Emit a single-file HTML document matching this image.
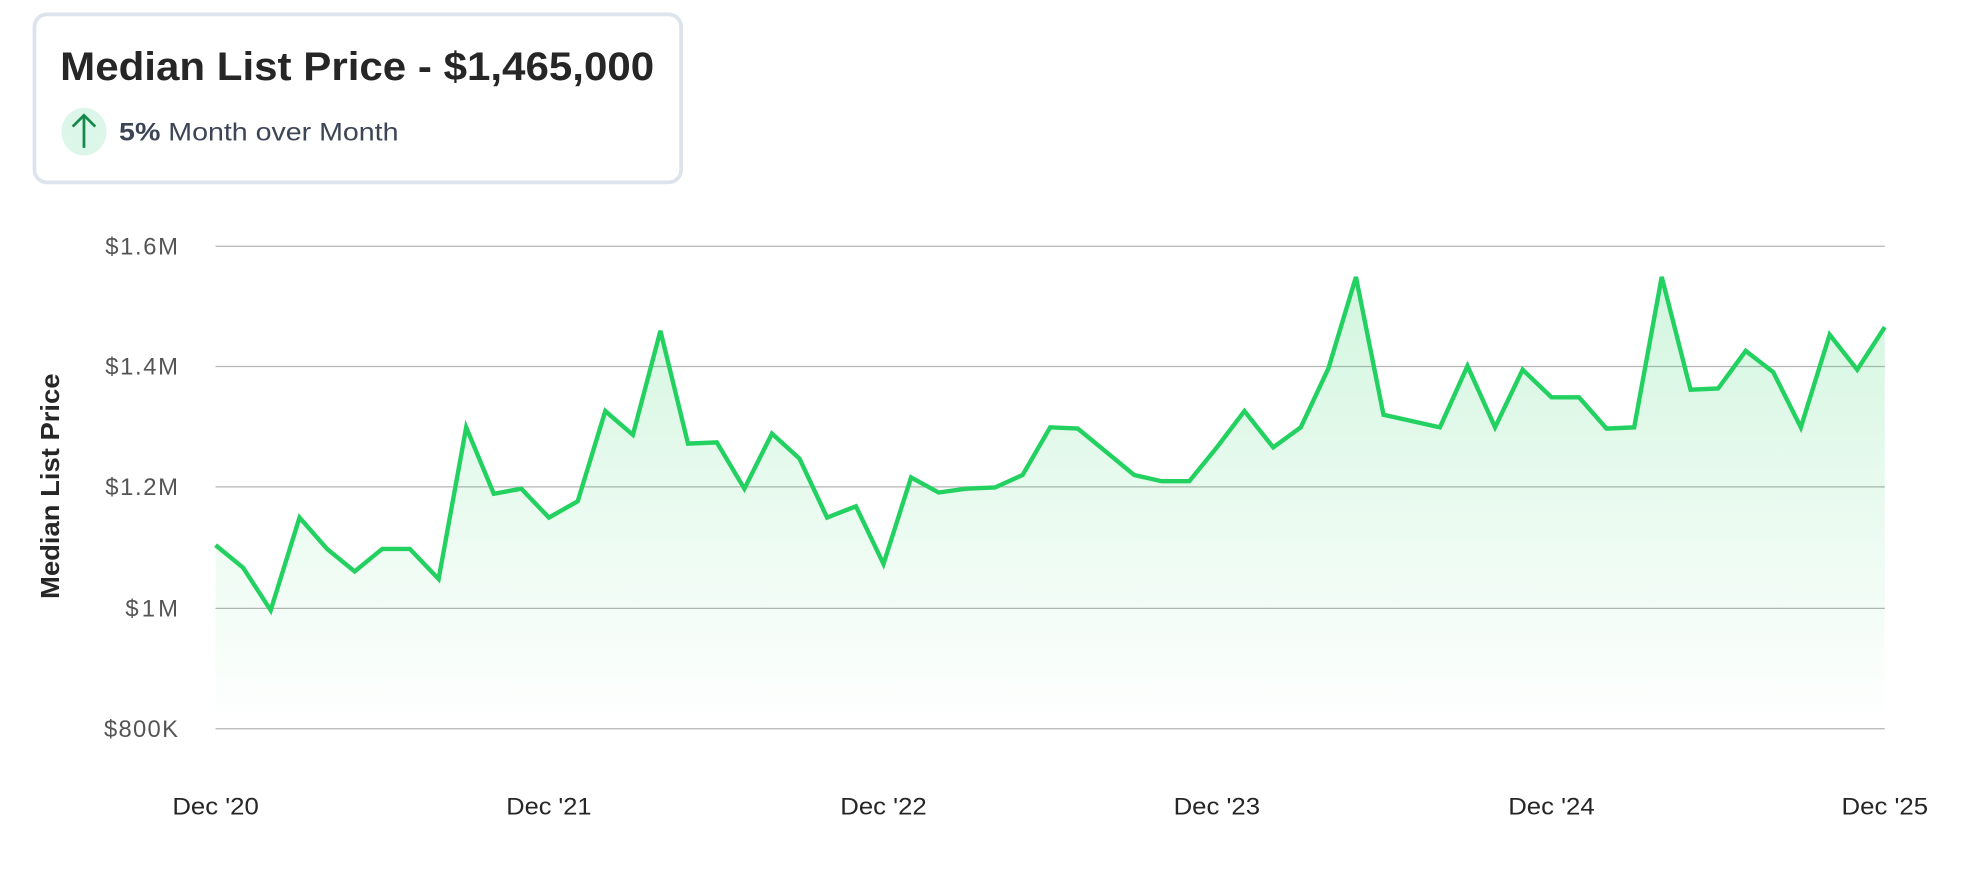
<!DOCTYPE html>
<html><head><meta charset="utf-8"><style>
html,body{margin:0;padding:0;background:#fff;width:1965px;height:886px;overflow:hidden}
svg{display:block}
text{font-family:"Liberation Sans",sans-serif}
</style></head><body>
<svg width="1965" height="886" viewBox="0 0 1568 707" xmlns="http://www.w3.org/2000/svg">
<defs>
<linearGradient id="g" x1="0" y1="0" x2="0" y2="1" gradientUnits="userSpaceOnUse" gradientTransform="translate(0,220) scale(1,361)">
<stop offset="0" stop-color="#22d160" stop-opacity="0.2"/>
<stop offset="1" stop-color="#22d160" stop-opacity="0"/>
</linearGradient>
</defs>
<rect x="27.5" y="11.5" width="516" height="134" rx="10" fill="#fff" stroke="#dde3ec" stroke-width="3"/>
<text x="48" y="64" font-size="32" font-weight="bold" fill="#262626" textLength="474" lengthAdjust="spacingAndGlyphs">Median List Price - $1,465,000</text>
<ellipse cx="67" cy="105" rx="18" ry="19" fill="#dcf7e9"/>
<path d="M67 118 V92 M58 101 L67 92 L76 101" stroke="#16894a" stroke-width="2.2" fill="none"/>
<text x="95" y="112" font-size="20" fill="#3c4556" textLength="223" lengthAdjust="spacingAndGlyphs"><tspan font-weight="bold">5%</tspan> Month over Month</text>
<g stroke="#b5b5b5" stroke-width="1">
<line x1="172" y1="196.5" x2="1504" y2="196.5"/>
<line x1="172" y1="292.5" x2="1504" y2="292.5"/>
<line x1="172" y1="388.5" x2="1504" y2="388.5"/>
<line x1="172" y1="485.5" x2="1504" y2="485.5"/>
<line x1="172" y1="581.5" x2="1504" y2="581.5"/>
</g>
<g font-size="19" fill="#555" lengthAdjust="spacingAndGlyphs">
<text x="84" y="203" textLength="58">$1.6M</text>
<text x="84" y="299" textLength="58">$1.4M</text>
<text x="84" y="395" textLength="58">$1.2M</text>
<text x="100" y="492" textLength="42">$1M</text>
<text x="83" y="588" textLength="59">$800K</text>
</g>
<text transform="translate(47,388) rotate(-90)" x="-90" font-size="21" font-weight="bold" fill="#262626" textLength="180" lengthAdjust="spacingAndGlyphs">Median List Price</text>
<g font-size="19" fill="#262626">
<text x="137.5" y="650" textLength="69" lengthAdjust="spacingAndGlyphs">Dec '20</text>
<text x="404" y="650" textLength="68" lengthAdjust="spacingAndGlyphs">Dec '21</text>
<text x="670.5" y="650" textLength="69" lengthAdjust="spacingAndGlyphs">Dec '22</text>
<text x="936.5" y="650" textLength="69" lengthAdjust="spacingAndGlyphs">Dec '23</text>
<text x="1203.5" y="650" textLength="69" lengthAdjust="spacingAndGlyphs">Dec '24</text>
<text x="1469.5" y="650" textLength="69" lengthAdjust="spacingAndGlyphs">Dec '25</text>
</g>
<path fill="url(#g)" d="M172 435 L194 453 L216 487 L239 413 L261 438 L283 456 L305 438 L327 438 L350 462 L372 341 L394 394 L416 390 L438 413 L461 400 L483 328 L505 347 L527 264 L549 354 L572 353 L594 390 L616 346 L638 366 L660 413 L683 404 L705 450 L727 381 L749 393 L771 390 L794 389 L816 379 L838 341 L860 342 L882 360 L905 379 L927 384 L949 384 L971 357 L993 328 L1016 357 L1038 341 L1060 294 L1082 221 L1104 331 L1149 341 L1171 292 L1193 341 L1215 295 L1238 317 L1260 317 L1282 342 L1304 341 L1326 221 L1349 311 L1371 310 L1393 280 L1415 297 L1437 341 L1460 267 L1482 295 L1504 261 L1504 581 L172 581 Z"/>
<path fill="none" stroke="#22d160" stroke-width="3.5" stroke-linejoin="miter" d="M172 435 L194 453 L216 487 L239 413 L261 438 L283 456 L305 438 L327 438 L350 462 L372 341 L394 394 L416 390 L438 413 L461 400 L483 328 L505 347 L527 264 L549 354 L572 353 L594 390 L616 346 L638 366 L660 413 L683 404 L705 450 L727 381 L749 393 L771 390 L794 389 L816 379 L838 341 L860 342 L882 360 L905 379 L927 384 L949 384 L971 357 L993 328 L1016 357 L1038 341 L1060 294 L1082 221 L1104 331 L1149 341 L1171 292 L1193 341 L1215 295 L1238 317 L1260 317 L1282 342 L1304 341 L1326 221 L1349 311 L1371 310 L1393 280 L1415 297 L1437 341 L1460 267 L1482 295 L1504 261"/>
</svg>
</body></html>
